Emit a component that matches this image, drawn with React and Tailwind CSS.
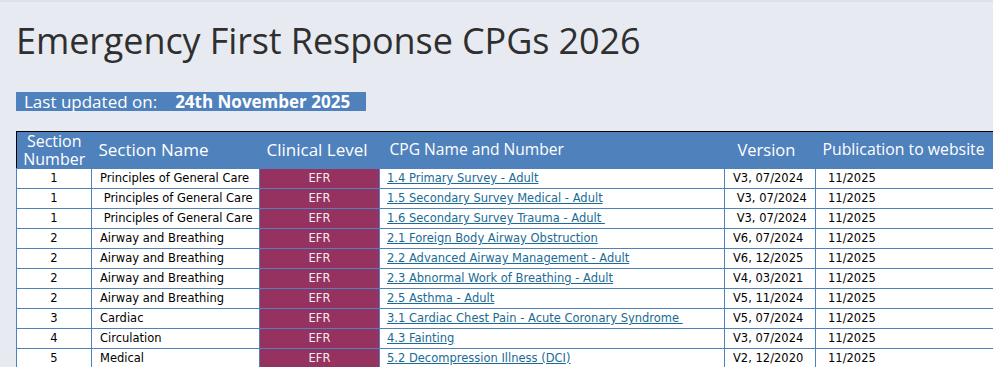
const rows = [
  ['1', 'Principles of General Care', '1.4 Primary Survey - Adult', 'V3, 07/2024'],
  ['1', ' Principles of General Care', '1.5 Secondary Survey Medical - Adult', ' V3, 07/2024'],
  ['1', ' Principles of General Care', '1.6 Secondary Survey Trauma - Adult ', ' V3, 07/2024'],
  ['2', 'Airway and Breathing', '2.1 Foreign Body Airway Obstruction', 'V6, 07/2024'],
  ['2', 'Airway and Breathing', '2.2 Advanced Airway Management - Adult', 'V6, 12/2025'],
  ['2', 'Airway and Breathing', '2.3 Abnormal Work of Breathing - Adult', 'V4, 03/2021'],
  ['2', 'Airway and Breathing', '2.5 Asthma - Adult', 'V5, 11/2024'],
  ['3', 'Cardiac', '3.1 Cardiac Chest Pain - Acute Coronary Syndrome ', 'V5, 07/2024'],
  ['4', 'Circulation', '4.3 Fainting', 'V3, 07/2024'],
  ['5', 'Medical', '5.2 Decompression Illness (DCI)', 'V2, 12/2020'],
];

const head = "font-['Open_Sans','Noto_Sans',sans-serif] text-white font-normal";
const cell = 'border border-[#4f81bd] h-[20px] p-0 leading-[19px]';

export default function App() {
  return (
    <div className="min-h-[367px] bg-[#e7eaf0] border-t-2 border-[#dde0e6] pl-4 overflow-hidden">
      <h1 className="pt-[15px] font-['Open_Sans','Noto_Sans',sans-serif] text-[36px] leading-[48px] text-[#2f2f2f] tracking-[-0.1px]">
        Emergency First Response CPGs 2026
      </h1>
      <div className="mt-[27px] w-[350px] h-[19px] bg-[#4f81bd] flex items-center pl-[8px] text-white font-['Open_Sans','Noto_Sans',sans-serif] text-[17px] leading-[19px]">
        <span>Last updated on:</span>
        <span className="ml-[18px] font-bold">24th November 2025</span>
      </div>
      <table className="mt-[20px] w-[977px] border-collapse table-fixed border border-black font-['DejaVu_Sans',sans-serif] text-[11.5px] text-black">
        <colgroup>
          <col className="w-[75px]" />
          <col className="w-[168px]" />
          <col className="w-[120px]" />
          <col className="w-[345px]" />
          <col className="w-[91px]" />
          <col className="w-[178px]" />
        </colgroup>
        <thead>
          <tr className="bg-[#4f81bd] h-[37px] border border-black">
            <th className={`${head} text-[16px] text-center`}>
              <span className="block leading-[18px]">Section</span>
              <span className="block leading-[18px]">Number</span>
            </th>
            <th className={`${head} text-[17px] text-left pl-[7px]`}>Section Name</th>
            <th className={`${head} text-[17px] text-left pl-[7px]`}>Clinical Level</th>
            <th className={`${head} text-[15.6px] text-left pl-[10px]`}>CPG Name and Number</th>
            <th className={`${head} text-[16.5px] text-left pl-[13px]`}>Version</th>
            <th className={`${head} text-[15.8px] text-left pl-[7px]`}>Publication to website</th>
          </tr>
        </thead>
        <tbody>
          {rows.map((r, i) => (
            <tr key={i} className="bg-white">
              <td className={`${cell} text-center`}>{r[0]}</td>
              <td className={`${cell} pl-[8px] whitespace-pre`}>{r[1]}</td>
              <td className={`${cell} bg-[#963260] text-[#f4eaf0] text-center`}>EFR</td>
              <td className={`${cell} pl-[7px] whitespace-pre`}>
                <a href="#" className="text-[#1a6b96] underline">{r[2]}</a>
              </td>
              <td className={`${cell} pl-[8px] whitespace-pre`}>{r[3]}</td>
              <td className={`${cell} pl-[12px]`}>11/2025</td>
            </tr>
          ))}
        </tbody>
      </table>
    </div>
  );
}
